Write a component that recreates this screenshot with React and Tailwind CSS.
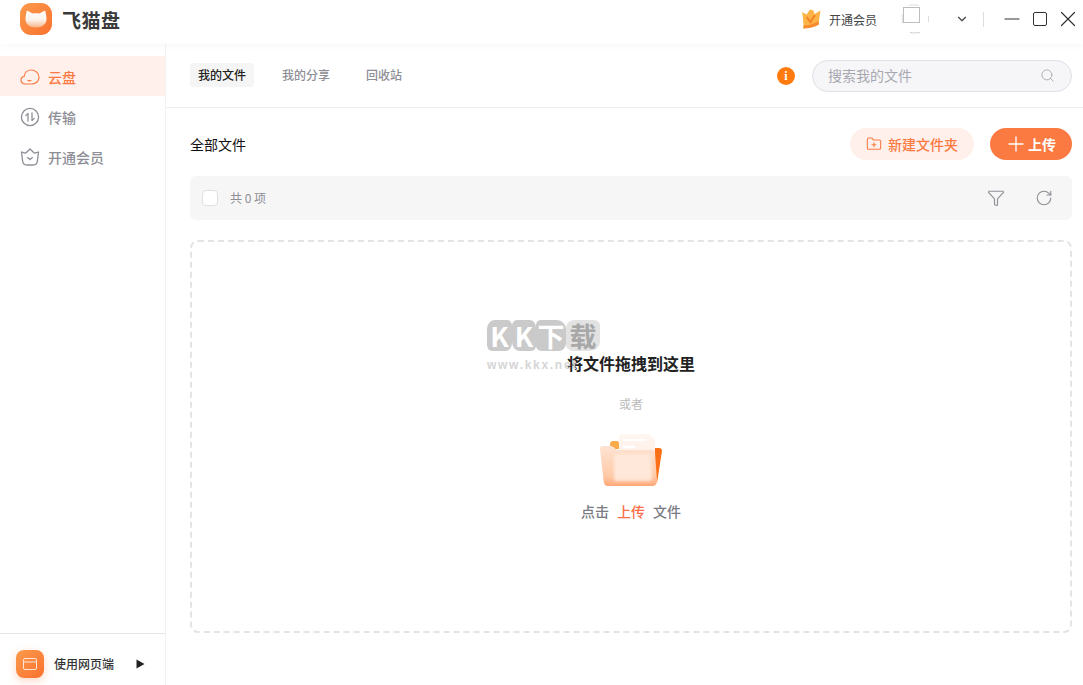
import React from "react";
import { ChevronDown, Minus, X, Search, Plus, Filter, RotateCw, FolderPlus } from "lucide-react";

const CatLogo = () => (
  <div className="w-8 h-8 rounded-[11px] bg-gradient-to-br from-[#fb9a4b] to-[#f9702f] flex items-center justify-center">
    <svg width="22" height="18" viewBox="0 0 22 18">
      <defs>
        <linearGradient id="cat" x1="0" y1="0" x2="0" y2="1">
          <stop offset="0" stopColor="#ffffff" />
          <stop offset="0.55" stopColor="#fdf3ec" />
          <stop offset="1" stopColor="#f6b68a" />
        </linearGradient>
      </defs>
      <path d="M2 0.5 C4 1.500 6 2.500 7.500 3.500 C9.500 3 12.500 3 14.500 3.500 C16 2.500 18 1.500 20 0.5 C20.800 3 21.500 6 21.500 9 C21.500 14.500 17 17.500 11 17.500 C5 17.500 0.5 14.500 0.5 9 C0.5 6 1.200 3 2 0.5 Z" fill="url(#cat)" />
    </svg>
  </div>
);

const CloudIcon = () => (
  <svg width="20" height="20" viewBox="0 0 20 20" fill="none" stroke="#fb7a42" strokeWidth="1.2" strokeLinecap="round">
    <path d="M4.6 17 C2.4 16.6 1 15 1 13 C1 11 2.4 9.6 4.2 9.3 C4.6 5.6 7.4 3 11 3 C15.4 3 19 6.2 19 10.2 C19 14 16 17 12 17 Z" />
    <path d="M8 13.6 H11" />
  </svg>
);

const TransferIcon = () => (
  <svg width="20" height="20" viewBox="0 0 20 20" fill="none" stroke="#8e8e96" strokeWidth="1.3" strokeLinecap="round" strokeLinejoin="round">
    <circle cx="10" cy="10" r="8.6" />
    <path d="M8 14 V6.5 L5.8 8.6" />
    <path d="M12 6 V13.5 L14.2 11.4" />
  </svg>
);

const VipIcon = () => (
  <svg width="20" height="20" viewBox="0 0 20 20" fill="none" stroke="#8e8e96" strokeWidth="1.3" strokeLinecap="round" strokeLinejoin="round">
    <path d="M1.5 5 L5.5 6.2 L10 2 L14.5 6.2 L18.5 5 L17.4 14 C17.2 16.4 15.4 18 13 18 H7 C4.6 18 2.8 16.4 2.6 14 Z" />
    <path d="M7.6 10.6 L10 12.6 L12.4 10.6" />
  </svg>
);

const Crown = () => (
  <svg width="20" height="20" viewBox="0 0 20 20">
    <path d="M1 3 L5.500 5.500 L9 0.5 L12.500 1.500 L13.500 5 L19.500 1.500 L17.500 15 L2.500 19.500 C2.500 14 2 8 1 3 Z" fill="#fbb445" />
    <path d="M2.500 19.500 C8 19.500 14 18 18 15.500 L17.500 12 C12 15 7 16.500 2.500 16.500 Z" fill="#f78d2e" />
    <path d="M5.500 8 L9.500 13 L14 6" fill="none" stroke="#f5812a" strokeWidth="2" />
  </svg>
);

const AvatarStub = () => (
  <svg width="30" height="30" viewBox="0 0 30 30" fill="none">
    <rect x="2.500" y="3.500" width="16" height="15" fill="#fff" stroke="#bdbdbd" />
    <path d="M8 1.300 C11 0.800 15 0.800 18 1.500" stroke="#dddddd" />
    <path d="M1.300 10 C1 13 1 16 1.500 19.500" stroke="#dddddd" />
    <path d="M27.500 12 V18" stroke="#dddddd" />
    <path d="M9 28.500 C12 29 16 29 19 28.500" stroke="#cfcfcf" />
  </svg>
);

const FolderArt = () => (
  <svg width="64" height="58" viewBox="0 0 64 58">
    <defs>
      <linearGradient id="front" x1="0" y1="0" x2="0" y2="1">
        <stop offset="0" stopColor="#fee3d2" />
        <stop offset="0.75" stopColor="#ffcaa8" />
        <stop offset="1" stopColor="#ffa878" />
      </linearGradient>
      <linearGradient id="paper" x1="0" y1="0" x2="0" y2="1">
        <stop offset="0" stopColor="#fff7f1" />
        <stop offset="1" stopColor="#ffeadd" />
      </linearGradient>
      <filter id="soft" x="-20%" y="-20%" width="140%" height="140%">
        <feGaussianBlur stdDeviation="1.8" />
      </filter>
      <filter id="edge" x="-10%" y="-10%" width="120%" height="120%">
        <feGaussianBlur stdDeviation="0.5" />
      </filter>
    </defs>
    <path d="M52 15 H60 C62 15 63 16 63 18 L58 50 C56 40 54 25 52 15 Z" fill="#fb7016" filter="url(#edge)" />
    <path d="M11 12 C11 9 12 8 14 8 H18 C19 8 20 9 20 11 V16 H11 Z" fill="#fdaa4a" filter="url(#edge)" />
    <path d="M20 3 C20 2 21 1 22 1 H50 L56 6 V40 H20 Z" fill="url(#paper)" filter="url(#edge)" />
    <path d="M24 7 H46" stroke="#ffffff" strokeWidth="2" strokeLinecap="round" />
    <path d="M25 14 H35" stroke="#ffffff" strokeWidth="2.400" strokeLinecap="round" />
    <path d="M1 16 C1 14 2 13 4 13 H12 C15 13 16 17 19 17 H53 C55 17 56 18 56 20 L58 48 C58 51 56 53 53 53 H9 C6 53 5 51 4.600 48 Z" fill="url(#front)" filter="url(#edge)" />
    <path d="M15 21 H52 L53 45 C53 47 52 48 50 48 H17 C15 48 15 47 15 45 Z" fill="#ffe7d9" filter="url(#soft)" />
  </svg>
);

const navItems = [
  { label: "云盘", icon: <CloudIcon />, active: true },
  { label: "传输", icon: <TransferIcon /> },
  { label: "开通会员", icon: <VipIcon /> },
];

const tabs = ["我的文件", "我的分享", "回收站"];

export default function App() {
  return (
    <div className="relative w-[1083px] h-[685px] overflow-hidden bg-white flex flex-col font-['Noto_Sans_CJK_SC','Noto_Sans',sans-serif]">
      {/* title bar */}
      <div className="h-11 shrink-0 flex items-center pl-5 pr-[2px] pb-[6px] shadow-[0_2px_8px_rgba(0,0,0,0.03)] z-10">
        <CatLogo />
        <span className="ml-[10px] text-[19px] font-bold text-[#3a3a3a] tracking-[0.5px] leading-none">飞猫盘</span>
        <div className="ml-auto flex items-center">
          <Crown />
          <span className="ml-2 mt-[2px] text-[12px] text-[#444]">开通会员</span>
          <div className="ml-6"><AvatarStub /></div>
          <ChevronDown size={14} className="ml-6 text-[#444]" />
          <div className="ml-[14px] w-px h-[15px] bg-[#ddd]"></div>
          <Minus size={24} strokeWidth={1.2} className="ml-4 text-[#333]" />
          <div className="ml-[9px] w-[14px] h-[14px] border-[1.5px] border-[#333] rounded-[2px]"></div>
          <X size={26} strokeWidth={1.1} className="ml-2 text-[#333]" />
        </div>
      </div>

      <div className="flex-1 flex min-h-0">
        {/* sidebar */}
        <aside className="w-[166px] shrink-0 border-r border-[#f2f2f2] flex flex-col pt-3">
          <nav className="flex flex-col">
            {navItems.map((item) => (
              <div
                key={item.label}
                className={`h-10 flex items-center pl-5 pt-[2px] gap-2 text-[14px] font-medium ${
                  item.active ? "bg-[#fff0ec] text-[#fb7a42]" : "text-[#8e8e96]"
                }`}
              >
                {item.icon}
                <span>{item.label}</span>
              </div>
            ))}
          </nav>
          <div className="mt-auto h-[52px] border-t border-[#e5e5e5] flex items-center pl-4 pt-[8px]">
            <div className="w-7 h-7 rounded-lg bg-gradient-to-br from-[#fb9a4b] to-[#f9702f] shadow-[0_3px_8px_rgba(251,122,66,0.3)] flex items-center justify-center">
              <svg width="14" height="12" viewBox="0 0 14 12" fill="none" stroke="#ffe6d4" strokeWidth="1">
                <rect x="0.5" y="0.5" width="13" height="11" rx="1.5" />
                <path d="M0.5 4 H13.500" />
              </svg>
            </div>
            <span className="ml-[10px] text-[12px] font-medium text-[#333]">使用网页端</span>
            <svg className="ml-[22px]" width="9" height="10" viewBox="0 0 9 10">
              <path d="M0.5 0.5 L8.500 5 L0.5 9.500 Z" fill="#222" />
            </svg>
          </div>
        </aside>

        {/* main */}
        <main className="flex-1 min-w-0 flex flex-col">
          <div className="h-[64px] shrink-0 border-b border-[#eeeeee] flex items-center pl-6 pr-[11px]">
            <div className="flex items-center gap-5 -mt-[1px]">
              {tabs.map((tab, i) => (
                <div
                  key={tab}
                  className={`h-6 flex items-center px-2 rounded text-[12px] font-medium ${
                    i === 0 ? "bg-[#f5f5f5] text-[#222]" : "text-[#8e8e96]"
                  }`}
                >
                  {tab}
                </div>
              ))}
            </div>
            <div className="ml-auto w-[18px] h-[18px] rounded-full bg-[#ff7a0f] flex items-center justify-center text-white text-[12px] font-bold font-['Liberation_Serif',serif] leading-none">
              i
            </div>
            <div className="ml-[17px] w-[260px] h-8 rounded-full bg-[#f6f6f8] border border-[#dfdfe6] flex items-center pl-[15px] pr-[16px]">
              <span className="text-[14px] text-[#a8a8b0]">搜索我的文件</span>
              <Search size={15} strokeWidth={1.3} className="ml-auto text-[#a0a0a8]" />
            </div>
          </div>

          <div className="flex-1 flex flex-col pl-6 pr-[11px] pt-5 pb-[52px] min-h-0">
            <div className="h-8 shrink-0 flex items-center">
              <span className="text-[14px] text-[#111]">全部文件</span>
              <div className="ml-auto h-8 w-[124px] rounded-full bg-[#fff0ec] flex items-center justify-center gap-[6px] text-[14px] font-medium text-[#fb7a42]">
                <FolderPlus size={16} strokeWidth={1.6} />
                新建文件夹
              </div>
              <div className="ml-4 h-8 w-[82px] rounded-full bg-[#fb7a42] flex items-center justify-center pr-[2px] text-[14px] font-bold text-white">
                <Plus size={24} strokeWidth={1.3} />
                上传
              </div>
            </div>

            <div className="mt-4 h-11 shrink-0 rounded-md bg-[#f6f6f6] flex items-center pl-3 pr-[19px]">
              <div className="w-4 h-4 rounded-[4px] bg-white border border-[#dfdfe6]"></div>
              <span className="ml-[12px] text-[12px] text-[#8e8e96]">共 0 项</span>
              <Filter size={18} strokeWidth={1.5} className="ml-auto text-[#8e8e96]" />
              <RotateCw size={18} strokeWidth={1.5} className="ml-[30px] text-[#8e8e96]" />
            </div>

            <div className="mt-5 flex-1 rounded-lg border-2 border-dashed border-[#e4e4e4] flex flex-col items-center pt-[109px]">
              <div className="text-[16px] leading-6 font-bold text-[#222]">将文件拖拽到这里</div>
              <div className="mt-[19px] text-[12px] leading-5 text-[#bbbbbb]">或者</div>
              <div className="mt-[19px]"><FolderArt /></div>
              <div className="mt-[10px] flex gap-2 text-[14px] leading-5 font-medium text-[#7b7b84]">
                <span>点击</span>
                <span className="text-[#fb6f4a]">上传</span>
                <span>文件</span>
              </div>
            </div>
          </div>
        </main>
      </div>

      {/* watermark over the page */}
      <div className="absolute left-[487px] top-[320px] pointer-events-none">
        <div className="flex h-[31px] text-[27px] leading-[31px] font-bold text-white text-center">
          <span className="w-[25px] bg-[#cacaca] rounded-[30%_18%_26%_20%]">K</span>
          <span className="w-[24px] bg-[#cacaca] rounded-[20%_26%_18%_30%]">K</span>
          <span className="w-[30px] bg-[#cacaca] rounded-[16%_30%_24%_18%]">下</span>
          <span className="w-[34px] bg-[#e2e2e2] text-[#a8a8a8] rounded-[26%_18%_30%_22%]">载</span>
        </div>
        <div className="mt-[6px] text-[12px] leading-4 font-bold tracking-[1.7px] text-[#d5d5d5] font-['Liberation_Sans',sans-serif] whitespace-nowrap">www.kkx.net</div>
      </div>
    </div>
  );
}
